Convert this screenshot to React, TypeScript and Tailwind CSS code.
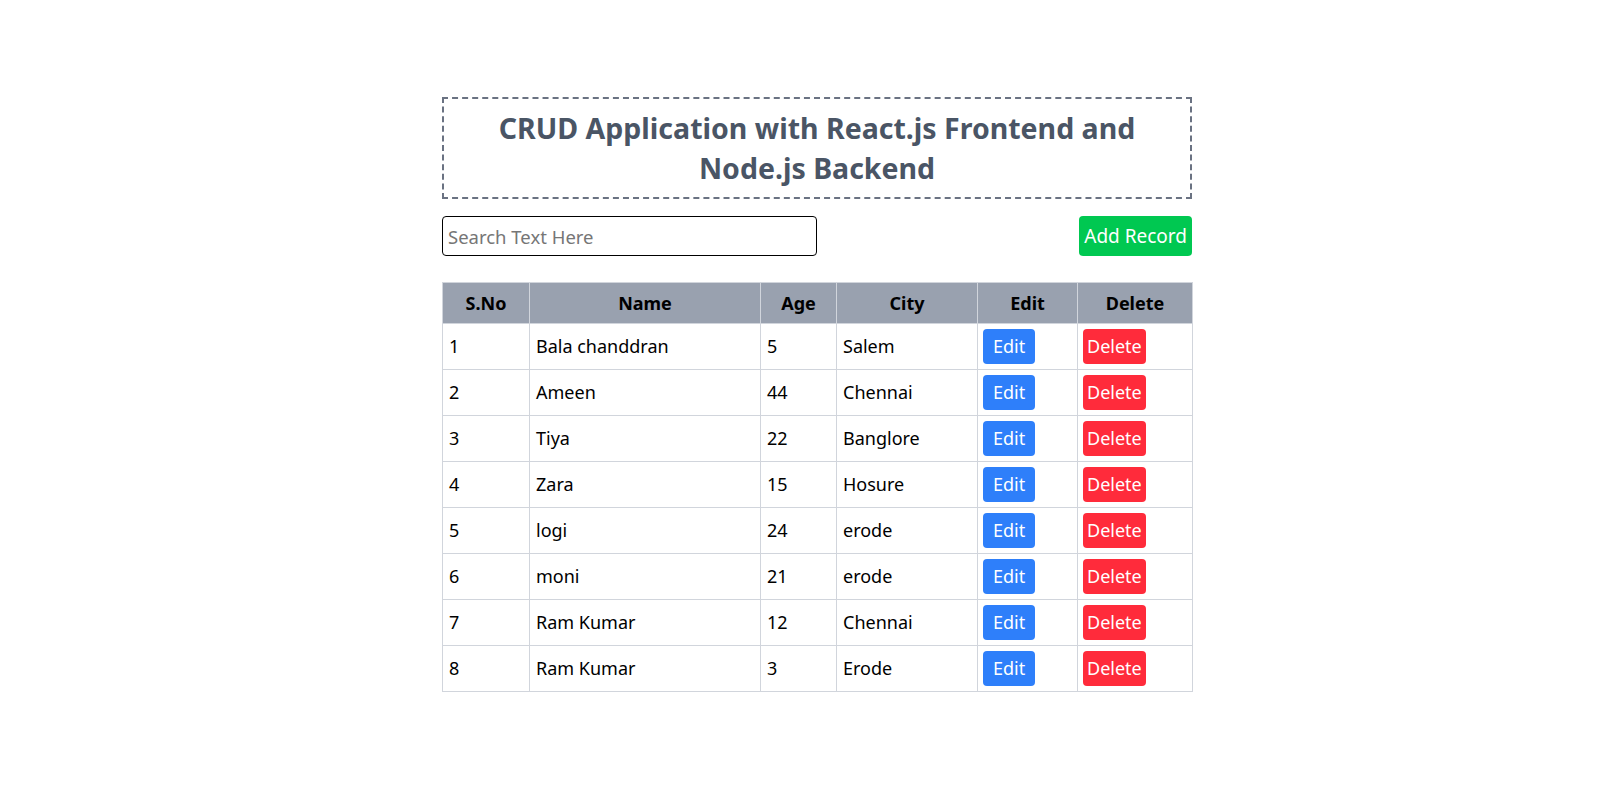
import React from "react";

const records = [
  { id: 1, name: "Bala chanddran", age: 5, city: "Salem" },
  { id: 2, name: "Ameen", age: 44, city: "Chennai" },
  { id: 3, name: "Tiya", age: 22, city: "Banglore" },
  { id: 4, name: "Zara", age: 15, city: "Hosure" },
  { id: 5, name: "logi", age: 24, city: "erode" },
  { id: 6, name: "moni", age: 21, city: "erode" },
  { id: 7, name: "Ram Kumar", age: 12, city: "Chennai" },
  { id: 8, name: "Ram Kumar", age: 3, city: "Erode" },
];

const font = { fontFamily: '"Noto Sans", "Open Sans", sans-serif' };

export default function App() {
  return (
    <div className="min-h-screen bg-white flex justify-center pl-[34px]" style={font}>
      <div className="w-[750px] pt-[97px]">
        <div className="border-2 border-dashed border-gray-500 py-[9px] text-center">
          <h1 className="text-[28.5px] leading-[40px] font-bold text-gray-600">
            CRUD Application with React.js Frontend and
            <br />
            Node.js Backend
          </h1>
        </div>

        <div className="mt-[17px] flex items-center justify-between">
          <input
            type="text"
            placeholder="Search Text Here"
            className="w-[375px] h-10 border border-black rounded px-[5px] text-[18.5px] placeholder:text-[#767676] outline-none"
          />
          <button className="h-10 px-[5px] rounded bg-[#00c851] text-white text-[19px]">
            Add Record
          </button>
        </div>

        <table className="mt-[26px] w-full table-fixed border-collapse border border-gray-300 text-[18px] text-black">
          <colgroup>
            <col className="w-[87px]" />
            <col className="w-[231px]" />
            <col className="w-[76px]" />
            <col className="w-[141px]" />
            <col className="w-[100px]" />
            <col className="w-[115px]" />
          </colgroup>
          <thead>
            <tr className="h-[41px] bg-gray-400">
              {["S.No", "Name", "Age", "City", "Edit", "Delete"].map((h) => (
                <th key={h} className="border border-gray-300 font-bold text-center">
                  {h}
                </th>
              ))}
            </tr>
          </thead>
          <tbody>
            {records.map((r) => (
              <tr key={r.id} className="h-[46px]">
                <td className="border border-gray-300 px-[6px]">{r.id}</td>
                <td className="border border-gray-300 px-[6px]">{r.name}</td>
                <td className="border border-gray-300 px-[6px]">{r.age}</td>
                <td className="border border-gray-300 px-[6px]">{r.city}</td>
                <td className="border border-gray-300 px-[5px]">
                  <button className="h-[35px] px-[10px] rounded bg-[#2e7ffa] text-white">
                    Edit
                  </button>
                </td>
                <td className="border border-gray-300 px-[5px]">
                  <button className="h-[35px] px-[4px] rounded bg-[#ff2b3b] text-white">
                    Delete
                  </button>
                </td>
              </tr>
            ))}
          </tbody>
        </table>
      </div>
    </div>
  );
}
